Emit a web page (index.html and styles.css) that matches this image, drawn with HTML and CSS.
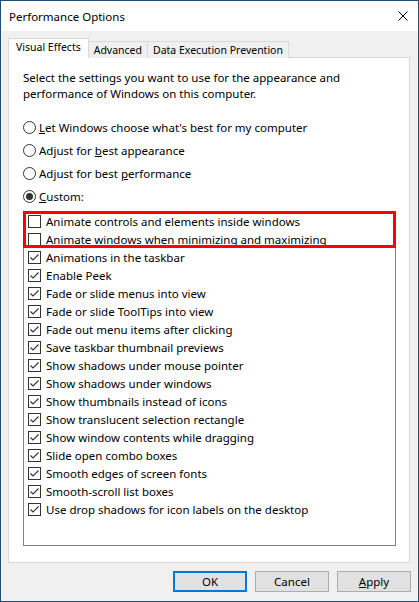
FILE: index.html
```html
<!DOCTYPE html>
<html lang="en">
<head>
  <meta charset="UTF-8">
  <title>Performance Options</title>
  <link rel="stylesheet" href="styles.css">
</head>
<body>

  <div class="window">
    <div class="titlebar">
      <span class="title">Performance Options</span>
      <svg class="close" width="10" height="10" viewBox="0 0 10 10">
        <path d="M0.5 0.5 L9.5 9.5 M9.5 0.5 L0.5 9.5" stroke="#000" stroke-width="1" fill="none"/>
      </svg>
    </div>

    <div class="tabs">
      <div class="tab active">Visual Effects</div>
      <div class="tab">Advanced</div>
      <div class="tab">Data Execution Prevention</div>
    </div>

    <div class="panel">
      <p class="desc">Select the settings you want to use for the appearance and performance of Windows on this computer.</p>

      <div class="radios">
        <label class="radio"><span class="dot"></span><span><u>L</u>et Windows choose what's best for my computer</span></label>
        <label class="radio"><span class="dot"></span><span>Adjust for <u>b</u>est appearance</span></label>
        <label class="radio"><span class="dot"></span><span>Adjust for best <u>p</u>erformance</span></label>
        <label class="radio on"><span class="dot"></span><span><u>C</u>ustom:</span></label>
      </div>

      <div class="listbox">
        <div class="mark"></div>
        <div class="row"><span class="box"></span>Animate controls and elements inside windows</div>
        <div class="row"><span class="box"></span>Animate windows when minimizing and maximizing</div>
        <div class="row on"><span class="box"></span>Animations in the taskbar</div>
        <div class="row on"><span class="box"></span>Enable Peek</div>
        <div class="row on"><span class="box"></span>Fade or slide menus into view</div>
        <div class="row on"><span class="box"></span>Fade or slide ToolTips into view</div>
        <div class="row on"><span class="box"></span>Fade out menu items after clicking</div>
        <div class="row on"><span class="box"></span>Save taskbar thumbnail previews</div>
        <div class="row on"><span class="box"></span>Show shadows under mouse pointer</div>
        <div class="row on"><span class="box"></span>Show shadows under windows</div>
        <div class="row on"><span class="box"></span>Show thumbnails instead of icons</div>
        <div class="row on"><span class="box"></span>Show translucent selection rectangle</div>
        <div class="row on"><span class="box"></span>Show window contents while dragging</div>
        <div class="row on"><span class="box"></span>Slide open combo boxes</div>
        <div class="row on"><span class="box"></span>Smooth edges of screen fonts</div>
        <div class="row on"><span class="box"></span>Smooth-scroll list boxes</div>
        <div class="row on"><span class="box"></span>Use drop shadows for icon labels on the desktop</div>
      </div>
    </div>

    <div class="buttons">
      <button class="btn default">OK</button>
      <button class="btn">Cancel</button>
      <button class="btn"><u>A</u>pply</button>
    </div>
  </div>

</body>
</html>
```

FILE: styles.css
```css
body {
  margin: 0;
  font-family: "Noto Sans", "Open Sans", sans-serif;
  font-size: 11.5px;
  color: #000;
  background: #f0f0f0;
}

.window {
  width: 419px;
  height: 602px;
  box-sizing: border-box;
  border: 1px solid #1e4d78;
  background: #f0f0f0;
}

.titlebar {
  height: 30px;
  display: flex;
  align-items: center;
  justify-content: space-between;
  padding: 0 10px 0 8px;
  background: #fff;
}

.tabs {
  display: flex;
  align-items: flex-end;
  height: 20px;
  margin: 7px 0 -1px 7px;
  position: relative;
  z-index: 1;
}

.tab {
  height: 17px;
  line-height: 17px;
  padding: 0 5px;
  font-size: 10.5px;
  box-sizing: border-box;
  border: 1px solid #d9d9d9;
  border-bottom: none;
  margin-left: -1px;
  background: #f0f0f0;
}

.tab.active {
  height: 20px;
  line-height: 16px;
  margin-left: 0;
  margin-right: -2px;
  padding: 0 7px;
  background: #fff;
  position: relative;
  z-index: 1;
}

.tab.active + .tab {
  margin-left: 1px;
}

.panel {
  margin: 0 8px 0 7px;
  height: 506px;
  box-sizing: border-box;
  padding: 12px 13px 0 14px;
  border: 1px solid #d9d9d9;
  background: #fff;
}

.desc {
  margin: 0;
  line-height: 16px;
}

.radios {
  margin-top: 14px;
  display: flex;
  flex-direction: column;
}

.radio {
  height: 23px;
  display: flex;
  align-items: center;
}

.dot {
  width: 13px;
  height: 13px;
  box-sizing: border-box;
  border: 1px solid #333;
  border-radius: 50%;
  margin-right: 3px;
  display: flex;
  align-items: center;
  justify-content: center;
  flex-shrink: 0;
}

.radio.on .dot::after {
  content: "";
  width: 7px;
  height: 7px;
  border-radius: 50%;
  background: #333;
}

.listbox {
  margin-top: 3px;
  height: 335px;
  box-sizing: border-box;
  border: 1px solid #828282;
  padding: 0 0 0 4px;
  position: relative;
}

.mark {
  position: absolute;
  top: -1px;
  left: -1px;
  right: -1px;
  height: 37px;
  box-sizing: border-box;
  border: 3px solid #ff0000;
}

.row {
  height: 18px;
  display: flex;
  align-items: center;
}

.box {
  width: 13px;
  height: 13px;
  box-sizing: border-box;
  border: 1px solid #333;
  margin-right: 5px;
  flex-shrink: 0;
  background: #fff no-repeat center;
}

.row.on .box {
  background-image: url("data:image/svg+xml,%3Csvg xmlns='http://www.w3.org/2000/svg' width='11' height='11' viewBox='0 0 11 11'%3E%3Cpath d='M1.5 5.5 L4 8 L9.5 2.5' stroke='%23333' stroke-width='1.1' fill='none'/%3E%3C/svg%3E");
}

.buttons {
  display: flex;
  justify-content: flex-end;
  gap: 8px;
  padding: 8px 7px 0 0;
}

.btn {
  width: 74px;
  height: 21px;
  padding: 0;
  font: inherit;
  color: #000;
  background: #e1e1e1;
  border: 1px solid #adadad;
}

.btn.default {
  border: 2px solid #0078d7;
}
```
